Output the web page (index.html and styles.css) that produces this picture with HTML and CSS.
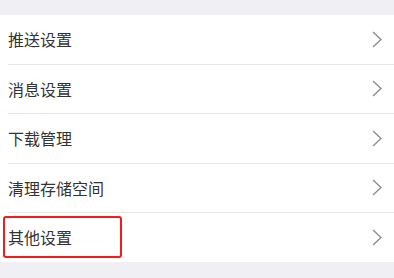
FILE: index.html
```html
<!DOCTYPE html>
<html lang="zh">
<head>
    <meta charset="UTF-8">
    <meta name="viewport" content="width=device-width, initial-scale=1.0">
    <title>设置</title>
    <link rel="stylesheet" href="styles.css">
</head>
<body>
    <ul class="menu-list">
        <li class="menu-item">
            <span class="menu-text">推送设置</span>
            <svg class="arrow" viewBox="0 0 10 17"><path d="M1 1 L9 8.5 L1 16" /></svg>
        </li>
        <li class="menu-item">
            <span class="menu-text">消息设置</span>
            <svg class="arrow" viewBox="0 0 10 17"><path d="M1 1 L9 8.5 L1 16" /></svg>
        </li>
        <li class="menu-item">
            <span class="menu-text">下载管理</span>
            <svg class="arrow" viewBox="0 0 10 17"><path d="M1 1 L9 8.5 L1 16" /></svg>
        </li>
        <li class="menu-item">
            <span class="menu-text">清理存储空间</span>
            <svg class="arrow" viewBox="0 0 10 17"><path d="M1 1 L9 8.5 L1 16" /></svg>
        </li>
        <li class="menu-item highlighted">
            <span class="menu-text">其他设置</span>
            <svg class="arrow" viewBox="0 0 10 17"><path d="M1 1 L9 8.5 L1 16" /></svg>
            <div class="mark"></div>
        </li>
    </ul>
</body>
</html>
```

FILE: styles.css
```css
body {
    margin: 0;
    background-color: #efeff4;
    font-family: "Noto Sans CJK SC", "Noto Sans", sans-serif;
}

.menu-list {
    list-style: none;
    margin: 15px 0 0;
    padding: 0 0 0 8px;
    background-color: #fff;
}

.menu-item {
    position: relative;
    display: flex;
    align-items: center;
    justify-content: space-between;
    height: 48.5px;
    padding-right: 12px;
    border-top: 1px solid #e6e6e6;
}

.menu-item:first-child {
    border-top: none;
}

.menu-text {
    font-size: 16px;
    color: #333;
}

.arrow {
    width: 10px;
    height: 17px;
    fill: none;
    stroke: #8a8a8a;
    stroke-width: 1.3;
}

.mark {
    position: absolute;
    left: -5px;
    top: 3px;
    width: 115px;
    height: 38px;
    border: 2px solid #f21c1c;
    border-radius: 3px;
}
```
